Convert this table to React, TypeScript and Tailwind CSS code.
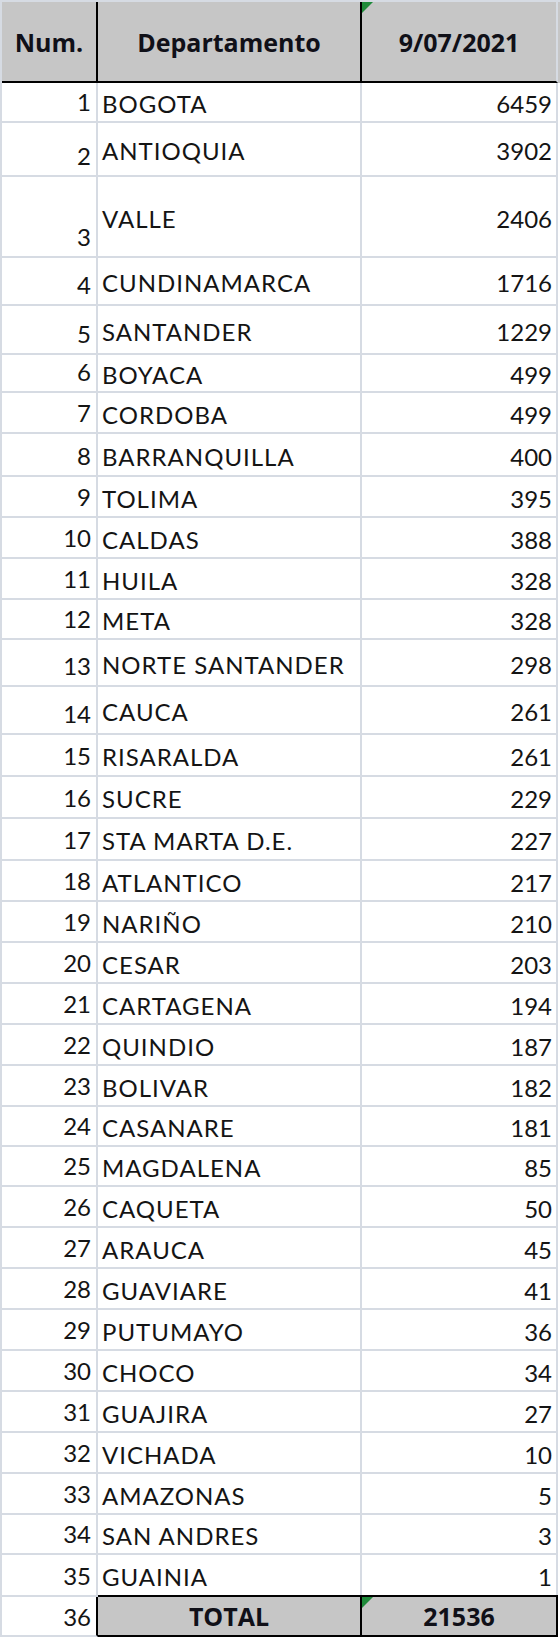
import React from "react"

const rows = [
  { n: 1, name: "BOGOTA", v: 6459, h: "h-[40px]" },
  { n: 2, name: "ANTIOQUIA", v: 3902, h: "h-[54px]" },
  { n: 3, name: "VALLE", v: 2406, h: "h-[81px]" },
  { n: 4, name: "CUNDINAMARCA", v: 1716, h: "h-[48px]" },
  { n: 5, name: "SANTANDER", v: 1229, h: "h-[49px]" },
  { n: 6, name: "BOYACA", v: 499, h: "h-[38px]" },
  { n: 7, name: "CORDOBA", v: 499, h: "h-[41px]" },
  { n: 8, name: "BARRANQUILLA", v: 400, h: "h-[43px]" },
  { n: 9, name: "TOLIMA", v: 395, h: "h-[41px]" },
  { n: 10, name: "CALDAS", v: 388, h: "h-[41px]" },
  { n: 11, name: "HUILA", v: 328, h: "h-[41px]" },
  { n: 12, name: "META", v: 328, h: "h-[40px]" },
  { n: 13, name: "NORTE SANTANDER", v: 298, h: "h-[47px]" },
  { n: 14, name: "CAUCA", v: 261, h: "h-[48px]" },
  { n: 15, name: "RISARALDA", v: 261, h: "h-[42px]" },
  { n: 16, name: "SUCRE", v: 229, h: "h-[42px]" },
  { n: 17, name: "STA MARTA D.E.", v: 227, h: "h-[42px]" },
  { n: 18, name: "ATLANTICO", v: 217, h: "h-[41px]" },
  { n: 19, name: "NARIÑO", v: 210, h: "h-[41px]" },
  { n: 20, name: "CESAR", v: 203, h: "h-[41px]" },
  { n: 21, name: "CARTAGENA", v: 194, h: "h-[41px]" },
  { n: 22, name: "QUINDIO", v: 187, h: "h-[41px]" },
  { n: 23, name: "BOLIVAR", v: 182, h: "h-[41px]" },
  { n: 24, name: "CASANARE", v: 181, h: "h-[40px]" },
  { n: 25, name: "MAGDALENA", v: 85, h: "h-[40px]" },
  { n: 26, name: "CAQUETA", v: 50, h: "h-[41px]" },
  { n: 27, name: "ARAUCA", v: 45, h: "h-[41px]" },
  { n: 28, name: "GUAVIARE", v: 41, h: "h-[41px]" },
  { n: 29, name: "PUTUMAYO", v: 36, h: "h-[41px]" },
  { n: 30, name: "CHOCO", v: 34, h: "h-[41px]" },
  { n: 31, name: "GUAJIRA", v: 27, h: "h-[41px]" },
  { n: 32, name: "VICHADA", v: 10, h: "h-[41px]" },
  { n: 33, name: "AMAZONAS", v: 5, h: "h-[41px]" },
  { n: 34, name: "SAN ANDRES", v: 3, h: "h-[40px]" },
  { n: 35, name: "GUAINIA", v: 1, h: "h-[42px]" },
]

// little green "number stored as text" flag in the cell corner
const ErrorFlag = () => (
  <div className="absolute left-0 top-0 h-0 w-0 border-r-[11px] border-t-[11px] border-r-transparent border-t-[#1f8a3a]" />
)

export default function App() {
  const total = rows.reduce((s, r) => s + r.v, 0)

  return (
    <div className="w-[560px] bg-white font-['Lato',sans-serif] text-[24px] leading-[28px] text-[#141414]">
      <div className="border-l-2 border-t-2 border-[#d6dbe3]">
        {/* header */}
        <div className="flex h-[81px] bg-[#c6c6c6] font-['Open_Sans',sans-serif] text-[25px] font-bold text-[#101018]">
          <div className="flex w-[96px] items-center justify-center border-b-2 border-r-2 border-b-black border-r-black">
            Num.
          </div>
          <div className="flex w-[264px] items-center justify-center border-b-2 border-r-2 border-b-black border-r-black">
            Departamento
          </div>
          <div className="relative flex w-[196px] items-center justify-center border-b-2 border-r-2 border-b-black border-r-[#d6dbe3]">
            <ErrorFlag />
            9/07/2021
          </div>
        </div>

        {rows.map((r) => (
          <div key={r.n} className={"flex " + r.h}>
            <div className="flex w-[96px] items-end justify-end border-b-2 border-r-2 border-[#d6dbe3] pb-[5px] pr-[5px]">
              {r.n}
            </div>
            <div className="flex w-[264px] items-center border-b-2 border-r-2 border-[#d6dbe3] pl-[4px] pt-[4px] tracking-[1px]">
              {r.name}
            </div>
            <div className="flex w-[196px] items-center justify-end border-b-2 border-r-2 border-[#d6dbe3] pr-[4px] pt-[4px]">
              {r.v}
            </div>
          </div>
        ))}

        {/* total */}
        <div className="flex h-[40px]">
          <div className="flex w-[96px] items-end justify-end border-b-2 border-r-2 border-b-[#d6dbe3] border-r-black pb-[4px] pr-[5px]">
            36
          </div>
          <div className="-mt-[2px] flex w-[264px] items-center justify-center border-y-2 border-r-2 border-black bg-[#c6c6c6] font-['Open_Sans',sans-serif] text-[25px] font-bold text-[#101018]">
            TOTAL
          </div>
          <div className="relative -mt-[2px] flex w-[196px] items-center justify-center border-y-2 border-r-2 border-black bg-[#c6c6c6] font-['Open_Sans',sans-serif] text-[25px] font-bold text-[#101018]">
            <ErrorFlag />
            {total}
          </div>
        </div>
      </div>
    </div>
  )
}
